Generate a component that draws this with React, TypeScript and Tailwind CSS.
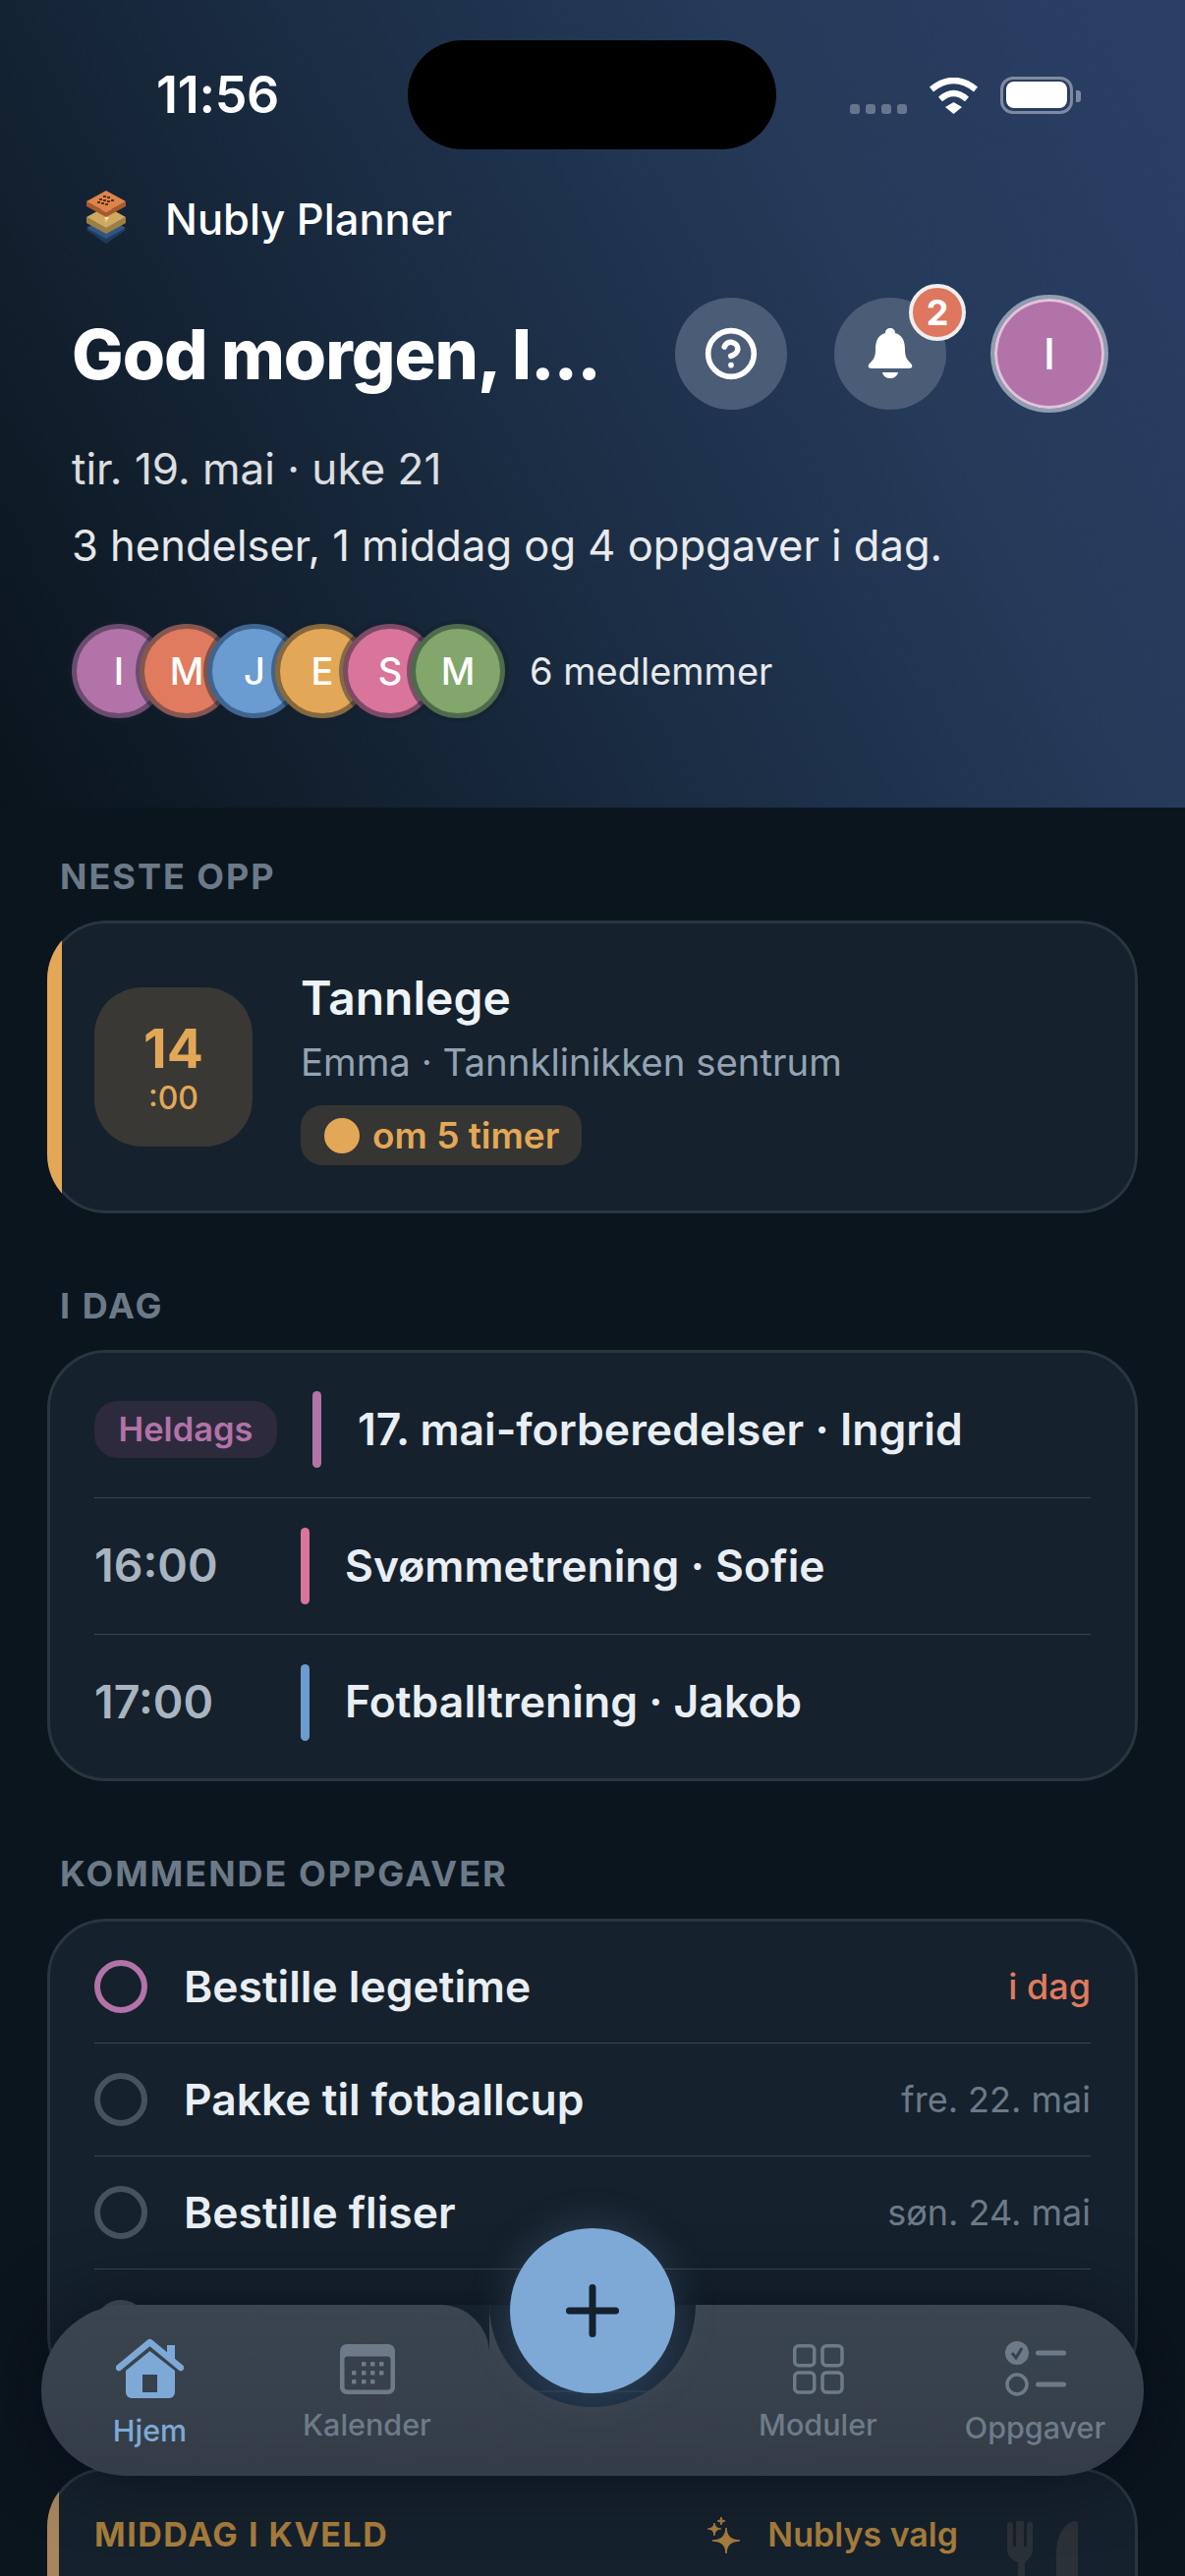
import { CircleHelp } from "lucide-react";

type NavItemProps = {
  label: string;
  icon: React.ReactNode;
  active?: boolean;
  padClass: string;
  gapClass: string;
};

const members = [
  { letter: "I", tone: "bg-[#b273a8] border-[#6b4b70]" },
  { letter: "M", tone: "bg-[#e07b5f] border-[#85564f]" },
  { letter: "J", tone: "bg-[#6a9bd1] border-[#3f658f]" },
  { letter: "E", tone: "bg-[#e3a857] border-[#85683f]" },
  { letter: "S", tone: "bg-[#d9759a] border-[#7d4a65]" },
  { letter: "M", tone: "bg-[#82a66b] border-[#4e6a4c]" },
];

const events = [
  { time: "16:00", title: "Svømmetrening · Sofie", bar: "bg-[#d9759a]" },
  { time: "17:00", title: "Fotballtrening · Jakob", bar: "bg-[#6a9bd1]" },
];

const tasks = [
  { title: "Bestille legetime", when: "i dag", ring: "border-[#b273a8]", whenColor: "font-medium text-[#e07b5f]" },
  { title: "Pakke til fotballcup", when: "fre. 22. mai", ring: "border-[#46535f]", whenColor: "text-[#6b7a88]" },
  { title: "Bestille fliser", when: "søn. 24. mai", ring: "border-[#46535f]", whenColor: "text-[#6b7a88]" },
];

function SectionLabel({ children }: { children: React.ReactNode }) {
  return (
    <h2 className="pl-[13px] text-[36px] leading-[44px] font-bold tracking-[2px] text-[#6b7a88]">
      {children}
    </h2>
  );
}

function Logo() {
  return (
    <svg width="40" height="54" viewBox="0 0 40 54">
      <polygon points="0,40 20,30 40,40 20,54" fill="#1e3a5c" />
      <polygon points="0,38 20,27 40,38 20,49" fill="#2f5488" />
      <polygon points="0,27 20,38 40,27 40,33 20,44 0,33" fill="#9c7f42" />
      <polygon points="20,16 40,27 20,38 0,27" fill="#cfa95f" />
      <polygon points="21,24 18,29 20,29 19,33 23,27 21,27" fill="#f6e7b8" />
      <polygon points="0,11 20,22 40,11 40,16 20,27 0,16" fill="#a85a2e" />
      <polygon points="20,0 40,11 20,22 0,11" fill="#df8449" />
      <g fill="#5a2f1a">
        <rect x="17" y="5" width="3" height="2" />
        <rect x="21" y="6" width="3" height="2" />
        <rect x="13" y="8" width="3" height="2" />
        <rect x="17" y="9" width="3" height="2" />
        <rect x="21" y="10" width="3" height="2" />
        <rect x="25" y="9" width="3" height="2" />
        <rect x="11" y="11" width="3" height="2" />
        <rect x="15" y="12" width="3" height="2" />
        <rect x="19" y="13" width="3" height="2" />
      </g>
    </svg>
  );
}

function StatusIcons() {
  return (
    <div className="flex items-start">
      <div className="mt-[28px] flex gap-[6px]">
        {[0, 1, 2, 3].map((dot) => (
          <span key={dot} className="size-[10px] rounded-[3px] bg-white/30" />
        ))}
      </div>
      <svg className="ml-[22px] mt-[1px]" width="51" height="37" viewBox="0 0 51 37" fill="none">
        <path d="M3 12 Q25.5 -6 48 12" stroke="#fff" strokeWidth="6.5" />
        <path d="M12 22 Q25.5 10 39 22" stroke="#fff" strokeWidth="6" />
        <path d="M17 30 L25.5 25 L34 30 L25.5 37 Z" fill="#fff" />
      </svg>
      <div className="ml-[22px] flex h-[38px] w-[74px] items-center justify-center rounded-[13px] border-[3px] border-white/40">
        <span className="h-[27px] w-[62px] rounded-[8px] bg-white" />
      </div>
      <span className="ml-[3px] mt-[14px] h-[12px] w-[5px] rounded-r-[3px] bg-white/40" />
    </div>
  );
}

function BellIcon() {
  return (
    <svg width="46" height="52" viewBox="0 0 46 52" fill="#fff">
      <path d="M23 0c-3 0-5 2-5 5C10 7 8 14 8 22c0 7-2 10-6 14-2 2-2 5 2 5h38c4 0 4-3 2-5-4-4-6-7-6-14 0-8-2-15-10-17 0-3-2-5-5-5z" />
      <path d="M15 45h16c-1 4-4 6-8 6s-7-2-8-6z" />
    </svg>
  );
}

function Header() {
  return (
    <header className="h-[822px] bg-[linear-gradient(62deg,#0a141c_0%,#1a2c42_42%,#263a5a_72%,#2b3e66_100%)]">
      <div className="flex h-[152px] items-end">
        <div className="flex h-[111px] w-[415px] items-center pl-[159px]">
          <span className="text-[52px] font-semibold leading-none text-white tracking-[-0.3px]">11:56</span>
        </div>
        <div className="h-[111px] w-[375px] rounded-full bg-black" />
        <div className="flex h-[111px] flex-1 items-center pl-[75px]">
          <StatusIcons />
        </div>
      </div>

      <div className="mt-[40px] flex items-center pl-[88px]">
        <Logo />
        <span className="ml-[40px] mt-[4px] text-[43.5px] font-medium leading-[54px] text-white">Nubly Planner</span>
      </div>

      <div className="relative mt-[50px] flex h-[120px] items-center pl-[73px]">
        <h1 className="mt-[2px] w-[614px] text-[70px] font-extrabold leading-none text-white tracking-[-1px]">God morgen, I...</h1>
        <div className="flex size-[114px] items-center justify-center rounded-full bg-[#4b5c76]">
          <CircleHelp size={56} strokeWidth={2.4} color="#fff" />
        </div>
        <div className="relative ml-[48px] flex size-[114px] items-center justify-center rounded-full bg-[#4b5c76]">
          <BellIcon />
          <span className="absolute -right-[20px] -top-[14px] flex size-[58px] items-center justify-center rounded-full border-[4px] border-[#eeeeee] bg-[#de7660] text-[36px] font-bold text-white">
            2
          </span>
        </div>
        <div className="ml-[45px] flex size-[120px] items-center justify-center rounded-full border-[4px] border-[#8f9db0] bg-[#b273a8] text-[44px] font-medium text-white shadow-[inset_0_0_0_3px_#e0c4dc]">
          I
        </div>
      </div>

      <p className="ml-[73px] mt-[30px] text-[44px] leading-[54px] text-white/85">tir. 19. mai · uke 21</p>
      <p className="ml-[73px] mt-[24px] text-[43.5px] leading-[54px] text-white/90">
        3 hendelser, 1 middag og 4 oppgaver i dag.
      </p>

      <div className="ml-[73px] mt-[53px] flex items-center">
        {members.map((member, idx) => (
          <div
            key={idx}
            className={`relative flex size-[96px] items-center justify-center rounded-full border-[5px] text-[38px] font-medium text-white shadow-[0_0_0_4px_rgba(20,32,46,0.45)] ${
              idx > 0 ? "-ml-[27px]" : ""
            } ${member.tone}`}
          >
            {member.letter}
          </div>
        ))}
        <span className="ml-[25px] text-[38px] leading-[46px] text-white/90">6 medlemmer</span>
      </div>
    </header>
  );
}

function NextUpCard() {
  return (
    <div className="relative mt-[23px] overflow-hidden rounded-[60px] bg-[#15212c]">
      <div className="flex h-[298px] items-center rounded-[60px] border-[3px] border-[#2a3540] pl-[45px]">
        <div className="flex h-[162px] w-[161px] flex-col items-center justify-center rounded-[48px] bg-[#393835]">
          <span className="mt-[2px] text-[55px] font-bold leading-[58px] text-[#e3a857]">14</span>
          <span className="mt-[4px] text-[32px] font-medium leading-[36px] text-[#e3a857]">:00</span>
        </div>
        <div className="ml-[49px] flex flex-col items-start">
          <span className="text-[48px] font-semibold leading-[60px] text-[#eef3f8]">Tannlege</span>
          <span className="mt-[11px] text-[38.4px] leading-[48px] text-[#93a3b3]">Emma · Tannklinikken sentrum</span>
          <span className="mt-[20px] flex h-[61px] items-center rounded-[22px] bg-[#353533] pl-[24px] pr-[23px]">
            <span className="size-[36px] rounded-full bg-[#e3a857]" />
            <span className="ml-[13px] text-[37px] font-semibold text-[#e3a857]">om 5 timer</span>
          </span>
        </div>
      </div>
      <div className="absolute inset-y-0 left-0 w-[15px] bg-[#e3a857]" />
    </div>
  );
}

function TodayCard() {
  return (
    <div className="mt-[23px] rounded-[60px] border-[3px] border-[#2a3540] bg-[#15212c] px-[45px] py-[9px]">
      <div className="flex h-[139px] items-center border-b-[1.5px] border-[#3a4550]">
        <span className="flex h-[58px] w-[186px] items-center justify-center rounded-[24px] bg-[#2d2a3e] text-[34.5px] font-semibold text-[#b273a8]">
          Heldags
        </span>
        <span className="ml-[36px] h-[78px] w-[9px] rounded-full bg-[#b273a8]" />
        <span className="ml-[37px] text-[44.5px] font-semibold text-[#e8eef4]">17. mai-forberedelser · Ingrid</span>
      </div>
      {events.map((event, idx) => (
        <div
          key={event.time}
          className={`flex items-center ${idx === 0 ? "h-[139px] border-b-[1.5px] border-[#3a4550]" : "h-[137px]"}`}
        >
          <span className="w-[210px] text-[46.5px] font-semibold text-[#a8b4c0]">{event.time}</span>
          <span className={`h-[78px] w-[9px] rounded-full ${event.bar}`} />
          <span className="ml-[36px] text-[44.5px] font-semibold text-[#e8eef4]">{event.title}</span>
        </div>
      ))}
    </div>
  );
}

function TasksCard() {
  return (
    <div className="mt-[24px] rounded-[60px] border-[3px] border-[#2a3540] bg-[#15212c] px-[45px] py-[9px]">
      {tasks.map((task) => (
        <div key={task.title} className="flex h-[115px] items-center border-b-[1.5px] border-[#3a4550]">
          <span className={`size-[54px] rounded-full border-[6px] ${task.ring}`} />
          <span className="ml-[37px] flex-1 text-[44.4px] font-semibold text-[#e8eef4]">{task.title}</span>
          <span className={`text-[36px] ${task.whenColor}`}>{task.when}</span>
        </div>
      ))}
      <div className="flex h-[115px] items-center">
        <span className="size-[54px] rounded-full border-[6px] border-[#46535f]" />
      </div>
    </div>
  );
}

function DinnerCard() {
  return (
    <div className="relative mt-[75px] h-[220px] overflow-hidden rounded-[60px] bg-[#15212c]">
      <div className="h-full rounded-[60px] border-[3px] border-[#2a3540] pl-[45px] pr-[180px] pt-[43px]">
        <div className="flex items-center">
          <span className="flex-1 text-[34px] font-bold leading-[44px] tracking-[1.5px] text-[#a67c3c]">MIDDAG I KVELD</span>
          <svg width="34" height="37" viewBox="0 0 34 37" fill="#a67c3c">
            <path d="M19 11 Q19 24 33 24 Q19 24 19 37 Q19 24 5 24 Q19 24 19 11 Z" stroke="#a67c3c" strokeWidth="1.5" />
            <path d="M7 6 Q7 12 14 12 Q7 12 7 19 Q7 12 0 12 Q7 12 7 6 Z" stroke="#a67c3c" strokeWidth="1.2" />
            <path d="M14 0 Q14 4 18 4 Q14 4 14 8 Q14 4 10 4 Q14 4 14 0 Z" stroke="#a67c3c" strokeWidth="1" />
          </svg>
          <span className="ml-[27px] text-[34px] font-semibold leading-[44px] text-[#a67c3c]">Nublys valg</span>
        </div>
      </div>
      <svg className="absolute left-[977px] top-[54px]" width="72" height="70" viewBox="0 0 72 70" fill="#2c3138">
        <path d="M0 4a3 3 0 0 1 6 0v22h3V2a4 4 0 0 1 8 0v24h3V4a3 3 0 0 1 6 0v24c0 8-5 12-8 14v28H11V42C5 40 0 36 0 28z" />
        <path d="M50 70V34C50 16 56 4 68 0c3 0 4 1 4 3v67z" />
      </svg>
      <div className="absolute inset-y-0 left-0 w-[12px] bg-[#a8855d]" />
    </div>
  );
}

function NavItem({ label, icon, active, padClass, gapClass }: NavItemProps) {
  return (
    <div className={`flex w-[221px] flex-col items-center ${padClass}`}>
      {icon}
      <span
        className={`text-[30.5px] leading-[40px] font-medium ${gapClass} ${
          active ? "text-[#7ea9d6]" : "text-[#6d7b89]"
        }`}
      >
        {label}
      </span>
    </div>
  );
}

function HomeIcon() {
  return (
    <svg width="69" height="61" viewBox="0 0 69 61">
      <rect x="52" y="7" width="8" height="16" fill="#7ea9d6" />
      <path d="M3 30 L34.5 4 L66 30" fill="none" stroke="#7ea9d6" strokeWidth="6.5" strokeLinecap="round" strokeLinejoin="round" />
      <path d="M10 33 L34.5 13 L60 33 V55 a6 6 0 0 1-6 6 H16 a6 6 0 0 1-6-6 Z" fill="#7ea9d6" />
      <rect x="27" y="37" width="15" height="18" fill="#37404b" />
    </svg>
  );
}

function CalendarIcon() {
  const dots = [
    [24, 20], [33, 20], [42, 20],
    [14, 29], [24, 29], [33, 29], [42, 29],
    [14, 38], [24, 38], [33, 38],
  ];
  return (
    <svg width="56" height="51" viewBox="0 0 56 51">
      <rect x="0" y="0" width="56" height="51" rx="7" fill="#6d7b89" />
      <rect x="4.5" y="12.5" width="47" height="34" rx="3" fill="#37404b" />
      {dots.map(([x, y]) => (
        <rect key={`${x}-${y}`} x={x - 2} y={y - 2} width="4.5" height="4.5" rx="1" fill="#6d7b89" />
      ))}
    </svg>
  );
}

function ModulesIcon() {
  return (
    <svg width="52" height="51" viewBox="0 0 52 51" fill="none" stroke="#6d7b89" strokeWidth="3.5">
      <rect x="1.75" y="1.75" width="20" height="20" rx="4" />
      <rect x="30" y="1.75" width="20" height="20" rx="4" />
      <rect x="1.75" y="29" width="20" height="20" rx="4" />
      <rect x="30" y="29" width="20" height="20" rx="4" />
    </svg>
  );
}

function TasksIcon() {
  return (
    <svg width="62" height="56" viewBox="0 0 62 56">
      <circle cx="12" cy="12" r="12" fill="#6d7b89" />
      <path d="M7 12 L11 17 L17 7" fill="none" stroke="#37404b" strokeWidth="3" />
      <rect x="31" y="9.5" width="31" height="5" rx="2.5" fill="#6d7b89" />
      <circle cx="12" cy="44" r="10" fill="none" stroke="#6d7b89" strokeWidth="3.5" />
      <rect x="31" y="41.5" width="31" height="5" rx="2.5" fill="#6d7b89" />
    </svg>
  );
}

function BottomNav() {
  return (
    <nav className="absolute bottom-[102px] left-[42px] flex h-[174px] w-[1122px] rounded-[87px] shadow-[0_0_70px_rgba(3,8,14,0.55)]">
      <div className="flex w-[456px] rounded-l-[87px] rounded-tr-[50px] bg-[linear-gradient(180deg,#3b4550,#333c47)]">
        <NavItem label="Hjem" active icon={<HomeIcon />} padClass="pt-[34px]" gapClass="mt-[13px]" />
        <NavItem label="Kalender" icon={<CalendarIcon />} padClass="pt-[40px]" gapClass="mt-[11px]" />
      </div>
      <div className="relative z-10 w-[210px] bg-[linear-gradient(180deg,#3b4550,#333c47)]">
        <div className="relative h-[104px] w-full overflow-hidden rounded-b-full bg-[linear-gradient(180deg,#16202c,#1c2d40)]">
          <div className="absolute inset-x-0 top-[87px] h-[2px] bg-white/5" />
        </div>
        <button className="absolute -top-[78px] left-[21px] flex size-[168px] items-center justify-center rounded-full bg-[#7ea9d6] shadow-[0_0_44px_rgba(126,169,214,0.22)]">
          <svg width="54" height="54" viewBox="0 0 54 54" stroke="#14212e" strokeWidth="7" strokeLinecap="round">
            <path d="M27 3.5V50.5M3.5 27H50.5" />
          </svg>
        </button>
      </div>
      <div className="flex w-[456px] justify-end rounded-r-[87px] bg-[linear-gradient(180deg,#3b4550,#333c47)]">
        <NavItem label="Moduler" icon={<ModulesIcon />} padClass="pt-[40px]" gapClass="mt-[11px]" />
        <NavItem label="Oppgaver" icon={<TasksIcon />} padClass="pt-[37px]" gapClass="mt-[12px]" />
      </div>
    </nav>
  );
}

export default function App() {
  return (
    <div className="relative h-[2622px] w-[1206px] overflow-hidden bg-[#0b151d] font-[Inter,sans-serif]">
      <Header />
      <main className="px-[48px] pt-[48px]">
        <SectionLabel>NESTE OPP</SectionLabel>
        <NextUpCard />
        <div className="mt-[72px]">
          <SectionLabel>I DAG</SectionLabel>
          <TodayCard />
        </div>
        <div className="mt-[72px]">
          <SectionLabel>KOMMENDE OPPGAVER</SectionLabel>
          <TasksCard />
        </div>
        <DinnerCard />
      </main>
      <BottomNav />
    </div>
  );
}
